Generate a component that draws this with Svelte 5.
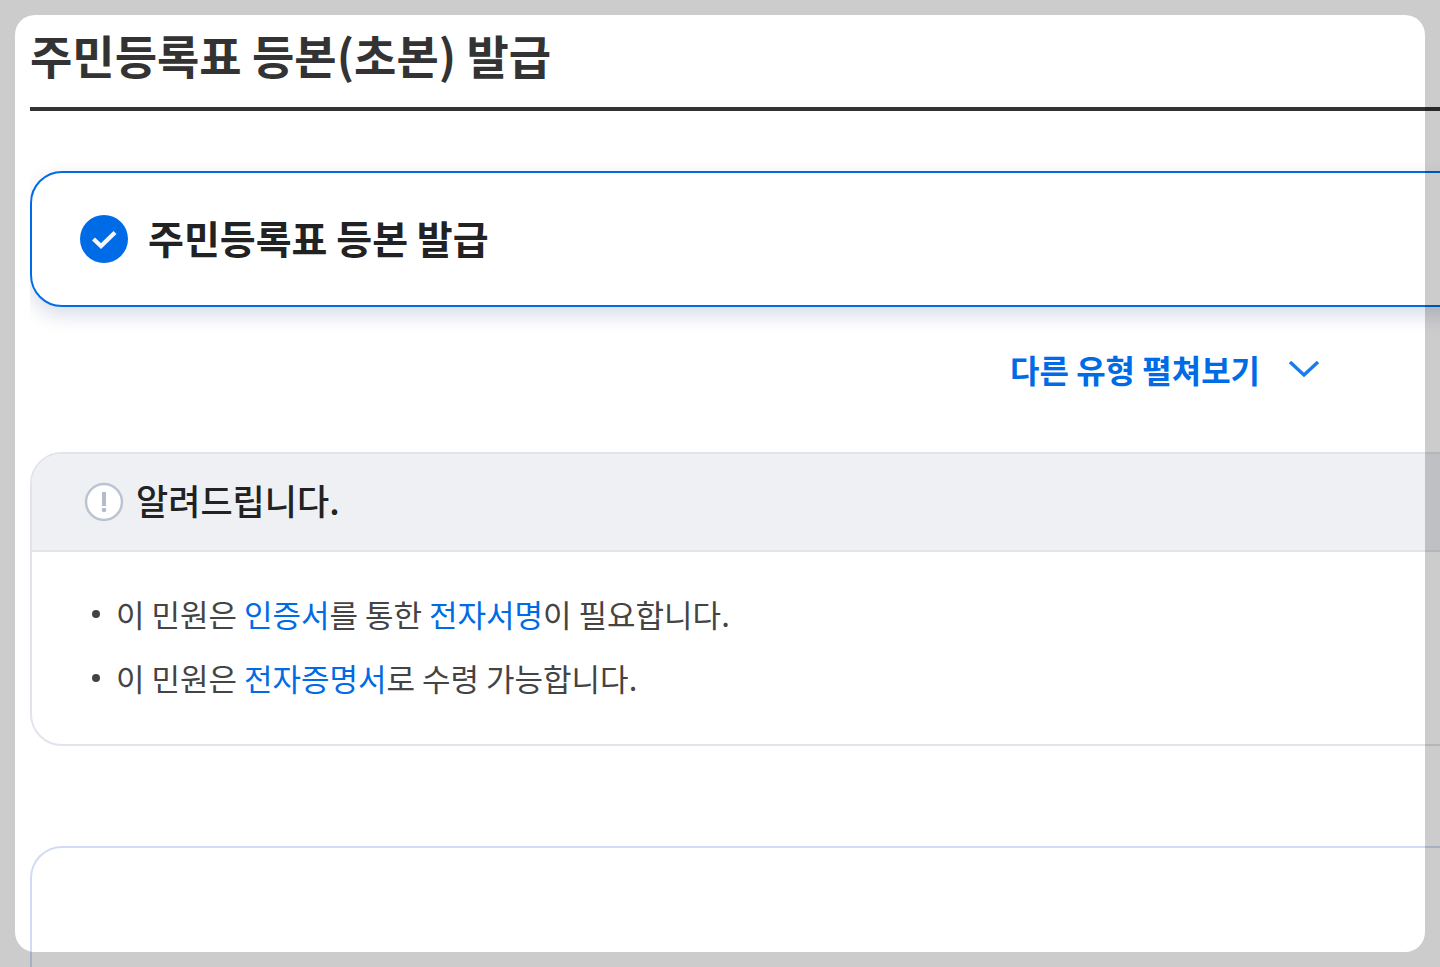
<script>
  const notices = [
    [
      { text: "이 민원은 " },
      { text: "인증서", point: true },
      { text: "를 통한 " },
      { text: "전자서명", point: true },
      { text: "이 필요합니다." },
    ],
    [
      { text: "이 민원은 " },
      { text: "전자증명서", point: true },
      { text: "로 수령 가능합니다." },
    ],
  ];
  let type = $state("full");
</script>

<main>
  <div class="content">
    <h1>주민등록표 등본(초본) 발급</h1>

    <label class="type">
      <input type="radio" name="type" value="full" bind:group={type} />
      <svg width="48" height="48" viewBox="0 0 48 48" aria-hidden="true">
        <circle cx="24" cy="24" r="24" fill="#006be6" />
        <path d="M13.500 24 L21 31 L35 17.500" fill="none" stroke="#f4f8fe" stroke-width="4.200" />
      </svg>
      <span>주민등록표 등본 발급</span>
    </label>

    <button class="more" type="button">
      다른 유형 펼쳐보기
      <svg width="32" height="20" viewBox="0 0 32 20" aria-hidden="true">
        <path d="M2 3 L16 16 L30 3" fill="none" stroke="#1a7af0" stroke-width="3.400" />
      </svg>
    </button>

    <section class="notice">
      <h2>
        <svg width="40" height="40" viewBox="0 0 40 40" aria-hidden="true">
          <circle cx="20" cy="20" r="18" fill="#fff" stroke="#bcc4d2" stroke-width="2.500" />
          <path d="M20 10 V24" stroke="#b4bccb" stroke-width="4" />
          <circle cx="20" cy="28" r="2.300" fill="#b4bccb" />
        </svg>
        <span>알려드립니다.</span>
      </h2>
      <ul>
        {#each notices as parts}
          <li>
            <p>{#each parts as part}<span class:point={part.point}>{part.text}</span>{/each}</p>
          </li>
        {/each}
      </ul>
    </section>

    <section class="panel"></section>
  </div>
</main>
<div class="frame"></div>

<style>
  :global(body) {
    margin: 0;
    overflow: hidden;
    background: #fff;
    font-family: "Noto Sans CJK KR", sans-serif;
    color: #222;
  }
  main {
    height: 100vh;
    margin-left: 30px;
    overflow: hidden;
  }
  .content {
    display: flex;
    flex-direction: column;
    width: 161%;
    height: 100%;
  }
  h1 {
    margin: 0 0 60px;
    padding: 22px 0 21px;
    border-bottom: 4px solid #333;
    font-size: 46px;
    line-height: 64px;
    font-weight: 700;
    color: #333;
  }
  .type {
    display: flex;
    align-items: center;
    gap: 20px;
    padding: 36px 48px;
    border: 2px solid #006be6;
    border-radius: 32px;
    box-shadow: 0 8px 20px rgba(0, 40, 110, 0.16);
    font-size: 39px;
    line-height: 56px;
    font-weight: 700;
    cursor: pointer;
  }
  .type input {
    position: absolute;
    opacity: 0;
  }
  .type svg {
    flex: none;
  }
  .type span {
    padding-bottom: 4px;
  }
  .more {
    display: flex;
    align-items: center;
    align-self: center;
    gap: 28px;
    margin: 38px 0 59px;
    padding: 0;
    border: 0;
    background: none;
    font: inherit;
    font-size: 32px;
    line-height: 48px;
    font-weight: 700;
    color: #006be6;
    cursor: pointer;
  }
  .notice {
    border: 2px solid #e1e4eb;
    border-radius: 32px;
    overflow: hidden;
  }
  h2 {
    display: flex;
    align-items: center;
    gap: 12px;
    margin: 0;
    padding: 20px 52px;
    border-bottom: 2px solid #e1e4eb;
    background: #eff0f4;
    font-size: 35px;
    line-height: 52px;
    font-weight: 500;
  }
  h2 span {
    padding-bottom: 4px;
  }
  ul {
    display: flex;
    flex-direction: column;
    gap: 16px;
    margin: 0;
    padding: 38px 60px 42px;
    list-style: none;
    font-size: 31px;
    line-height: 48px;
    color: #444;
  }
  li {
    display: flex;
    align-items: center;
    gap: 16px;
  }
  li::before {
    content: "";
    width: 8px;
    height: 8px;
    border-radius: 50%;
    background: #444;
  }
  p {
    margin: 0;
  }
  .point {
    color: #006be6;
  }
  .panel {
    flex: 1;
    margin-top: 100px;
    border: 2px solid #d0dcf5;
    border-bottom: 0;
    border-radius: 32px 32px 0 0;
  }
  .frame {
    position: fixed;
    inset: 15px;
    border-radius: 20px;
    box-shadow: 0 0 0 40px rgba(0, 0, 0, 0.2);
    pointer-events: none;
  }
</style>
